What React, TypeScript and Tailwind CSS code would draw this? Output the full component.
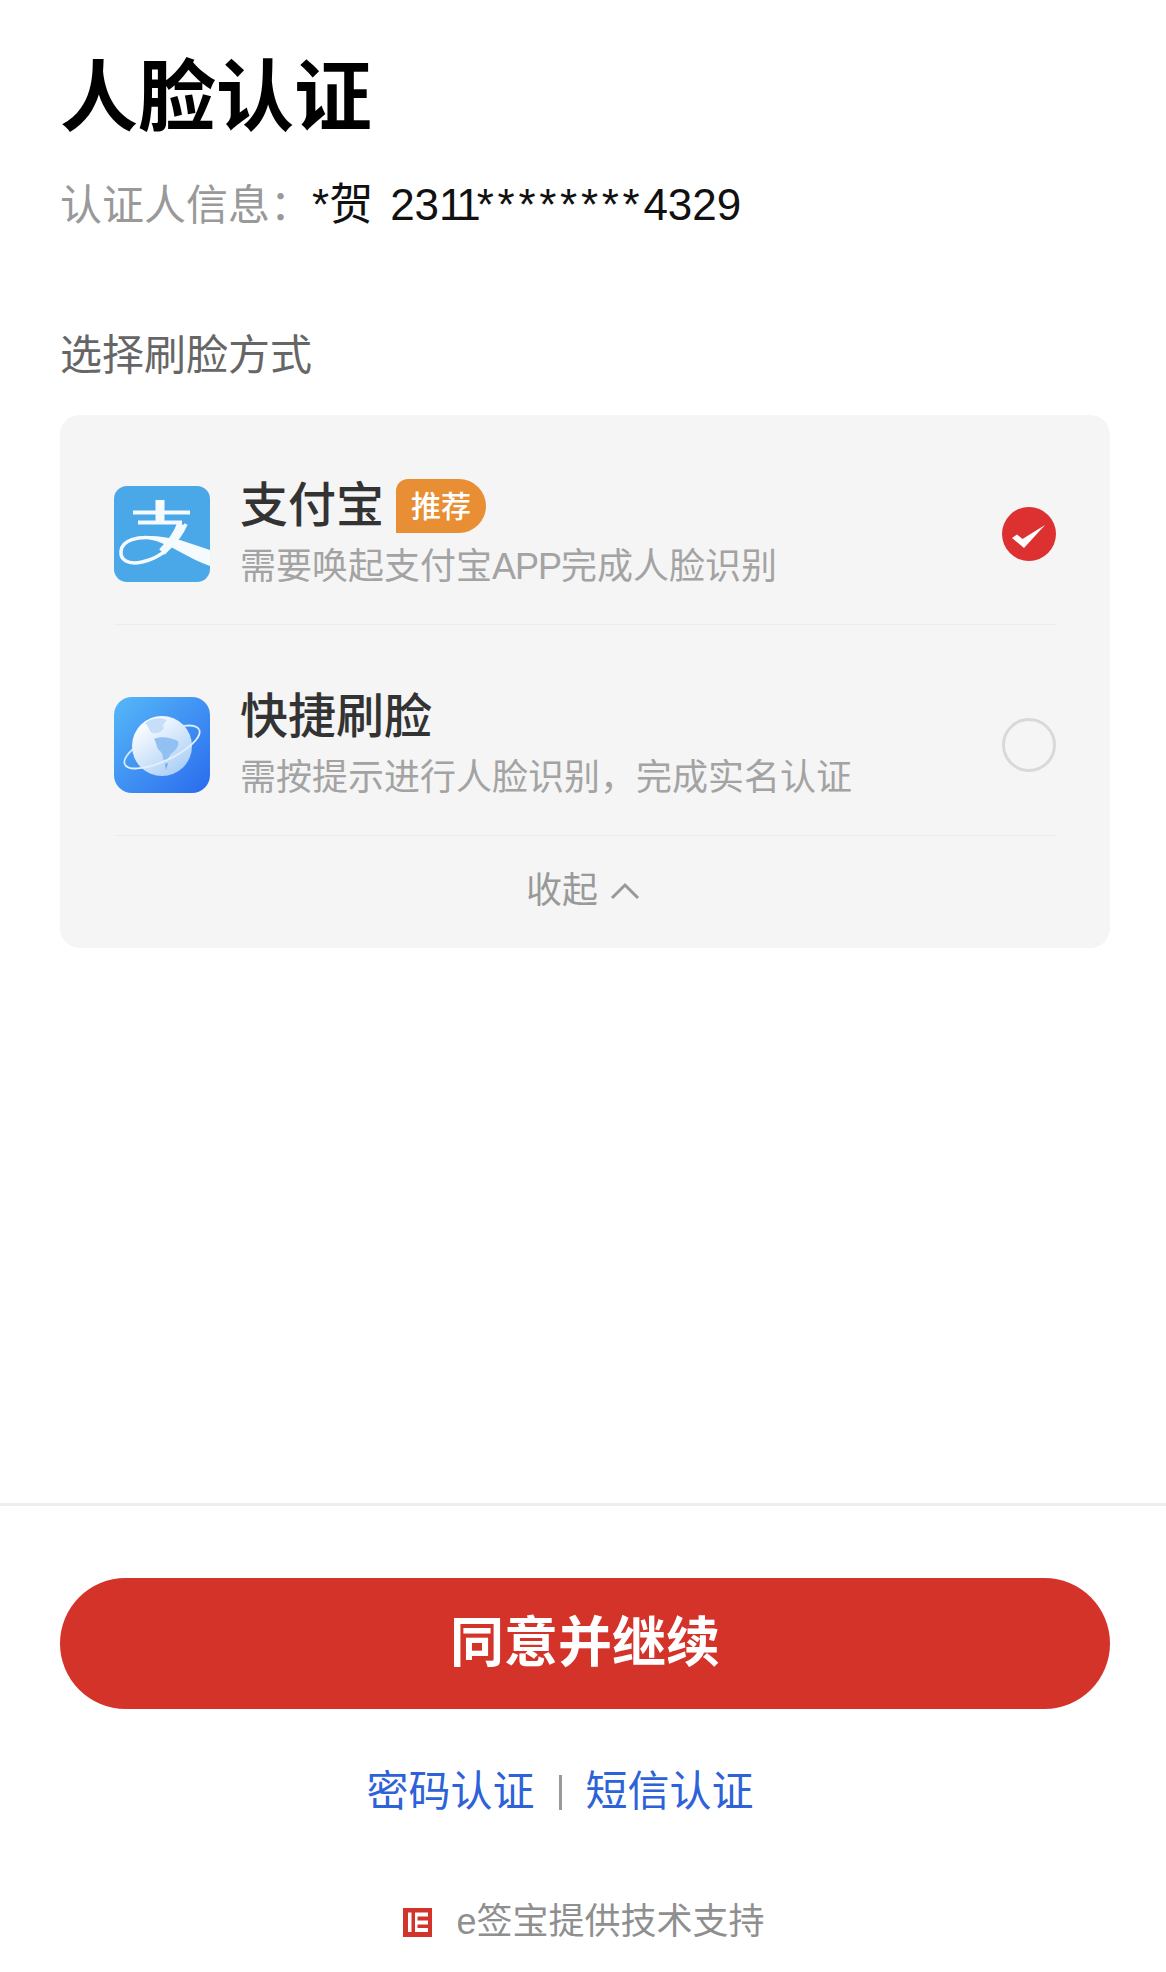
const AlipayIcon = () => (
  <svg width="96" height="96" viewBox="0 0 96 96" className="mt-[7px] shrink-0">
    <defs>
      <clipPath id="aliClip">
        <rect width="96" height="96" rx="13" />
      </clipPath>
    </defs>
    <g clipPath="url(#aliClip)">
      <rect width="96" height="96" fill="#4aa8e8" />
      <path d="M19 26.5H76M24 36.5H68" stroke="#f4fafe" strokeWidth="4" fill="none" />
      <path d="M46 14V37" stroke="#f4fafe" strokeWidth="9" fill="none" />
      <path
        d="M72 38C64 56 48 72 28 76C14 79 6 74 7 65C8 54 24 50 40 52"
        stroke="#f4fafe"
        strokeWidth="3.5"
        fill="none"
      />
      <path d="M67 38C63 50 56 58 48 66" stroke="#f4fafe" strokeWidth="8" fill="none" />
      <path d="M36 50C45 50 55 52 66 54L96 64V80C75 73 55 57 36 53.5Z" fill="#f4fafe" />
    </g>
  </svg>
);

const GlobeIcon = () => (
  <svg width="96" height="96" viewBox="0 0 96 96" className="mt-[7px] shrink-0">
    <defs>
      <linearGradient id="bg" x1="0" y1="0" x2="1" y2="1">
        <stop offset="0" stopColor="#56b8f8" />
        <stop offset="1" stopColor="#2a6bee" />
      </linearGradient>
      <linearGradient id="ball" x1="0.15" y1="0.1" x2="0.8" y2="1">
        <stop offset="0" stopColor="#ffffff" />
        <stop offset="1" stopColor="#a6ccf6" />
      </linearGradient>
    </defs>
    <rect width="96" height="96" rx="18" fill="url(#bg)" />
    <g transform="rotate(-25 48 50)">
      <path d="M7 50A41 14 0 0 1 89 50" fill="none" stroke="#d8eafc" strokeWidth="1.8" />
    </g>
    <circle cx="48" cy="49" r="30" fill="url(#ball)" />
    <path d="M31 26C37 21 46 20 53 23C50 27 48 27 50 31C47 36 42 37 38 36C34 33 36 30 31 26Z" fill="#c6def9" />
    <path d="M40 42C46 39 56 40 64 44C66 50 60 54 56 58C54 62 52 64 51 66C48 62 50 58 46 54C42 51 43 46 40 42Z" fill="#93c0f2" />
    <path d="M51 67L54 66L52 73Z" fill="#6fa8ea" />
    <g transform="rotate(-25 48 50)">
      <path d="M7 50A41 14 0 0 0 89 50" fill="none" stroke="#e4f0fd" strokeWidth="1.8" />
    </g>
  </svg>
);

const Row = ({
  icon,
  title,
  badge,
  desc,
  checked,
  className,
}: {
  icon: React.ReactNode;
  title: string;
  badge?: string;
  desc: React.ReactNode;
  checked?: boolean;
  className: string;
}) => (
  <div className={`flex items-start border-b-[1px] border-[#ececec] ${className}`}>
    {icon}
    <div className="ml-[30px] flex-1">
      <div className="flex h-[54px] items-center">
        <span className="text-[48px] leading-[54px] font-medium text-[#333333]">{title}</span>
        {badge && (
          <span className="ml-[12px] flex h-[54px] w-[90px] items-center justify-center rounded-tl-[12px] rounded-tr-[27px] rounded-br-[27px] bg-[#e88f35] text-[30px] font-medium text-white">
            {badge}
          </span>
        )}
      </div>
      <p className="mt-[9px] text-[36px] leading-[50px] text-[#a3a3a3]">{desc}</p>
    </div>
    {checked ? (
      <svg width="54" height="54" viewBox="0 0 54 54" className="mt-[28px] shrink-0">
        <circle cx="27" cy="27" r="27" fill="#dc3031" />
        <path d="M10 31L15 27.5L20.5 32L43 18L22 41Z" fill="#ffffff" />
      </svg>
    ) : (
      <span className="mt-[28px] size-[54px] shrink-0 rounded-full border-[3px] border-[#d9d9d9]" />
    )}
  </div>
);

export default function App() {
  return (
    <div className="flex h-[1972px] w-full flex-col bg-white font-['Liberation_Sans','Noto_Sans_CJK_SC',sans-serif]">
      <div className="flex-1 pt-[51px] pr-[56px] pl-[60px]">
        <h1 className="text-[78px] leading-[94px] font-semibold text-black">人脸认证</h1>
        <p className="mt-[32px] text-[42px] leading-[56px]">
          <span className="text-[#999999]">认证人信息：</span>
          <span className="text-[44px] text-[#111111]">
            *贺<span className="ml-[17px]">23</span>
            <span className="tracking-[-4px]">11</span>
            <span className="tracking-[3.7px]">********</span>4329
          </span>
        </p>
        <p className="mt-[94px] text-[42px] leading-[56px] text-[#666666]">选择刷脸方式</p>

        <div className="mt-[31px] rounded-[20px] bg-[#f5f5f5] px-[54px]">
          <Row
            className="h-[210px] pt-[64px]"
            icon={<AlipayIcon />}
            title="支付宝"
            badge="推荐"
            desc={
              <>
                需要唤起支付宝<span className="tracking-[-1px]">APP</span>完成人脸识别
              </>
            }
            checked
          />
          <Row
            className="h-[211px] pt-[65px]"
            icon={<GlobeIcon />}
            title="快捷刷脸"
            desc="需按提示进行人脸识别，完成实名认证"
          />
          <div className="flex h-[112px] items-center justify-center pr-[4px] pb-[2px] text-[36px] text-[#999999]">
            收起
            <svg width="30" height="18" viewBox="0 0 30 18" className="ml-[12px]">
              <path d="M2 16L15 3L28 16" fill="none" stroke="#999999" strokeWidth="3" />
            </svg>
          </div>
        </div>
      </div>

      <div className="h-[469px] border-t-[3px] border-[#eeeeee] pt-[72px] pr-[56px] pl-[60px]">
        <button className="flex h-[131px] w-full items-center justify-center rounded-full bg-[#d33329] text-[54px] font-bold text-white">
          同意并继续
        </button>
        <div className="mt-[55px] flex items-center justify-center pr-[50px] text-[42px] leading-[56px] text-[#2e62d8]">
          <span>密码认证</span>
          <span className="mx-[24px] h-[35px] w-[3px] bg-[#999999]" />
          <span>短信认证</span>
        </div>
        <div className="mt-[77px] flex items-center justify-center pr-[2px] text-[36px] leading-[50px] text-[#8f8f8f]">
          <svg width="29" height="29" viewBox="0 0 29 29" className="mr-[24px]">
            <rect width="29" height="29" fill="#d2332b" />
            <path d="M5 4.5H8.5V24H5ZM12 4.5H25V8.5H14.5V12.5H25V16.5H14.5V20H25V24H12Z" fill="#ffffff" />
          </svg>
          e签宝提供技术支持
        </div>
      </div>
    </div>
  );
}
